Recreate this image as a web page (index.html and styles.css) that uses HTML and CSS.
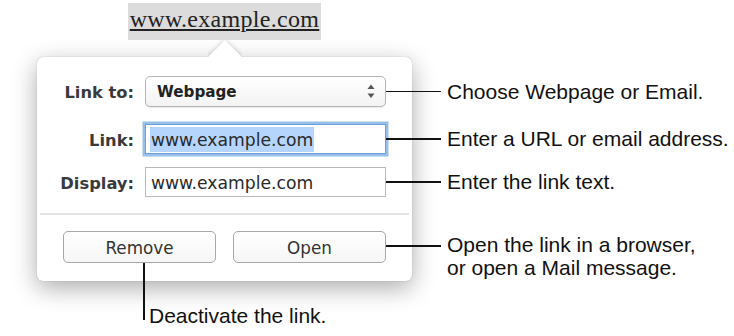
FILE: index.html
```html
<!DOCTYPE html>
<html>
<head>
<meta charset="utf-8">
<link rel="stylesheet" href="styles.css">
</head>
<body>
<div class="figure">
  <div class="head"><span class="hl">www.example.com</span></div>
  <div class="popover">
    <div class="arrow"><span class="arrow-sq"></span></div>
    <div class="row r-select">
      <span class="label">Link to:</span>
      <div class="field select">
        <span class="sel-text">Webpage</span>
        <svg class="stepper" width="8" height="15" viewBox="0 0 8 15"><polygon points="0.5,5 4,0.5 7.5,5" fill="#555"/><polygon points="0.5,9.5 4,14 7.5,9.5" fill="#555"/></svg>
      </div>
      <div class="callout"><span class="line"></span><span class="note">Choose Webpage or Email.</span></div>
    </div>
    <div class="row r-link">
      <span class="label">Link:</span>
      <div class="field input focus"><span class="selected">www.example.com</span></div>
      <div class="callout"><span class="line"></span><span class="note">Enter a URL or email address.</span></div>
    </div>
    <div class="row r-display">
      <span class="label">Display:</span>
      <div class="field input"><span>www.example.com</span></div>
      <div class="callout"><span class="line"></span><span class="note">Enter the link text.</span></div>
    </div>
    <div class="divider"></div>
    <div class="row r-buttons">
      <div class="btn btn-remove">Remove</div>
      <div class="btn">Open</div>
      <div class="callout multi"><span class="line"></span><span class="note">Open the link in a browser,<br>or open a Mail message.</span></div>
    </div>
  </div>
  <div class="bottom-note">Deactivate the link.</div>
</div>
</body>
</html>
```
FILE: styles.css
```css
html, body {
  margin: 0;
  padding: 0;
  background: #fff;
}
body {
  width: 734px;
  height: 336px;
  overflow: hidden;
}
.figure {
  padding: 3px 0 0 37px;
}
.head {
  width: 375px;
  text-align: center;
  height: 37px;
}
.hl {
  display: inline-block;
  background: #dcdcdc;
  padding: 0 2px 4px 2px;
  height: 33px;
  line-height: 33px;
  font-family: "Liberation Serif", serif;
  font-size: 24px;
  letter-spacing: 0.3px;
  color: #222;
  text-decoration: underline;
  text-decoration-thickness: 1.5px;
  text-underline-offset: 2px;
}
.popover {
  position: relative;
  margin-top: 17px;
  width: 375px;
  height: 224px;
  box-sizing: border-box;
  background: #fff;
  border-radius: 6px;
  box-shadow: 0 7px 24px rgba(0,0,0,0.33), 0 0 1px rgba(0,0,0,0.35);
  padding-top: 19px;
}
.arrow {
  position: absolute;
  left: 171px;
  top: -17px;
  width: 34px;
  height: 17px;
  overflow: hidden;
}
.arrow-sq {
  position: absolute;
  left: 5px;
  top: 5px;
  width: 24px;
  height: 24px;
  background: #fff;
  transform: rotate(45deg);
  box-shadow: 0 0 5px rgba(0,0,0,0.22);
}
.row {
  display: flex;
  align-items: center;
}
.r-select { height: 31px; }
.r-link { height: 30px; margin-top: 17px; }
.r-display { height: 30px; margin-top: 13px; }
.label {
  flex: none;
  width: 97px;
  margin-right: 11px;
  text-align: right;
  font-family: "DejaVu Sans", sans-serif;
  font-weight: bold;
  font-size: 16.3px;
  color: #3a3a3a;
  padding-top: 2px;
}
.field {
  flex: none;
  box-sizing: border-box;
  width: 241px;
  height: 100%;
  display: flex;
  align-items: center;
  font-family: "DejaVu Sans", sans-serif;
  color: #2a2a2a;
}
.select {
  border: 1px solid #b4b4b4;
  border-radius: 5px;
  background: linear-gradient(#ffffff, #f3f3f3);
  box-shadow: 0 1px 1px rgba(0,0,0,0.08);
  padding: 0 10px 0 11px;
  justify-content: space-between;
}
.sel-text {
  font-weight: bold;
  font-size: 15.2px;
  color: #222;
  padding-top: 1px;
}
.stepper {
  display: block;
}
.input {
  border: 1px solid #b9b9b9;
  background: #fff;
  padding: 2px 0 0 5px;
  font-size: 17.2px;
}
.input.focus {
  border: 1px solid #6b9fd8;
  box-shadow: 0 0 0 2.5px #98bfea;
  padding: 2px 0 1px 4px;
  align-items: stretch;
}
.selected {
  background: #b5d5fd;
  display: flex;
  align-items: center;
  padding: 1px 1px 0 1px;
}
.callout {
  flex: none;
  display: flex;
  align-items: center;
  font-family: "Liberation Sans", Arial, sans-serif;
  font-size: 21px;
  line-height: 22px;
  color: #111;
  white-space: nowrap;
}
.line {
  flex: none;
  width: 55px;
  height: 1.6px;
  background: #111;
  margin-right: 6px;
}
.callout.multi {
  align-self: flex-start;
  align-items: flex-start;
  margin-top: 3px;
  line-height: 22.5px;
}
.callout.multi .line {
  margin-top: 11px;
}
.divider {
  height: 2px;
  background: #e4e4e4;
  margin: 16px 3px 0 3px;
}
.r-buttons {
  height: 32px;
  margin-top: 16px;
  padding-left: 26px;
  align-items: flex-start;
}
.btn {
  flex: none;
  position: relative;
  box-sizing: border-box;
  width: 153px;
  height: 32px;
  margin-right: 17px;
  border: 1px solid #a8a8a8;
  border-radius: 5px;
  background: linear-gradient(#ffffff, #f6f6f6);
  display: flex;
  align-items: center;
  justify-content: center;
  font-family: "DejaVu Sans", sans-serif;
  font-size: 16.8px;
  color: #333;
  padding-top: 1px;
}
.btn + .btn {
  margin-right: 0;
}
.btn-remove::after {
  content: "";
  position: absolute;
  left: 79px;
  top: 100%;
  width: 2px;
  height: 57px;
  background: #111;
  margin-top: 1px;
}
.bottom-note {
  margin: 24px 0 0 112px;
  font-family: "Liberation Sans", Arial, sans-serif;
  font-size: 21px;
  line-height: 22px;
  color: #111;
  white-space: nowrap;
}
```
